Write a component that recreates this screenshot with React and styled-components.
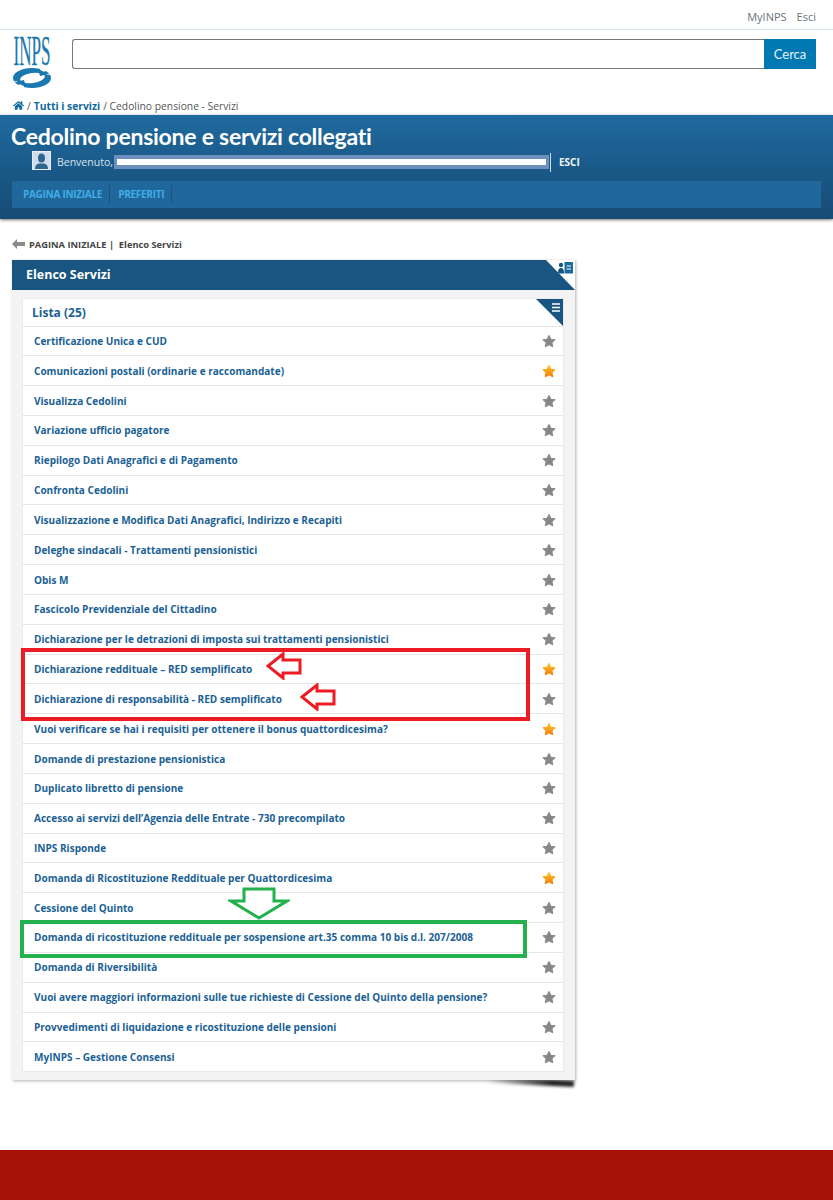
import React from 'react';
import styled, { createGlobalStyle } from 'styled-components';
import { FaHome } from 'react-icons/fa';

const GlobalStyle = createGlobalStyle`
  html, body {
    margin: 0;
    padding: 0;
    background: #fff;
    font-family: "Open Sans", "Liberation Sans", sans-serif;
  }
`;

const Page = styled.div`
  position: relative;
  z-index: 0;
  width: 833px;
  height: 1200px;
  overflow: hidden;
  display: flex;
  flex-direction: column;
`;

const TopBar = styled.div`
  height: 30px;
  border-bottom: 1px solid #d8e7ee;
  display: flex;
  justify-content: flex-end;
  align-items: center;
  gap: 10px;
  padding: 4px 17px 0 0;
  box-sizing: border-box;
  flex: none;
  font-size: 11px;
  color: #6b7378;
`;

const SearchRow = styled.div`
  display: flex;
  padding: 6px 17px 0 13px;
  height: 65px;
  box-sizing: border-box;
  flex: none;
`;

const LogoBox = styled.div`
  width: 59px;
  flex: none;
  svg { overflow: visible; }
`;

const SearchInput = styled.div`
  flex: 1;
  height: 30px;
  margin-top: 3px;
  box-sizing: border-box;
  border: 1px solid #777;
  border-right: none;
  border-radius: 3px 0 0 3px;
  background: #fff;
`;

const SearchButton = styled.div`
  width: 52px;
  height: 30px;
  margin-top: 3px;
  background: #0079b2;
  color: #e6f3f9;
  font-family: Lato, "Open Sans", sans-serif;
  font-size: 13px;
  display: flex;
  align-items: center;
  justify-content: center;
`;

const Crumbs = styled.div`
  height: 20px;
  flex: none;
  display: flex;
  align-items: center;
  gap: 3px;
  padding: 1px 0 0 13px;
  box-sizing: border-box;
  font-size: 10.3px;
  color: #555;
  svg { color: #0f6a9c; }
  b { color: #0f6a9c; font-weight: 700; }
`;

const Banner = styled.div`
  flex: none;
  height: 104px;
  box-sizing: border-box;
  padding: 8px 12px 0 12px;
  background: linear-gradient(#206a9f 0, #1a5a89 50%, #174c75 100%);
  box-shadow: 0 1px 3px rgba(0, 0, 0, 0.55);
  color: #fff;
`;

const Title = styled.div`
  font-family: Lato, "Open Sans", sans-serif;
  font-size: 23px;
  font-weight: 700;
  line-height: 27px;
  letter-spacing: -0.25px;
  margin-left: -1px;
`;

const Welcome = styled.div`
  display: flex;
  align-items: center;
  height: 20px;
  margin: 2px 0 0 20px;
  font-size: 10.5px;
  color: #d5e2ec;
`;

const Avatar = styled.svg`
  width: 19px;
  height: 19px;
  margin: -4px 6px 0 0;
  flex: none;
`;

const MaskedName = styled.div`
  width: 435px;
  height: 14px;
  margin-left: 1px;
  box-sizing: border-box;
  padding: 4px 3px;
  background: #6c90bd;
  &::after {
    content: '';
    display: block;
    height: 6px;
    background: #fff;
  }
`;

const Logout = styled.div`
  margin-left: 1px;
  height: 19px;
  border-left: 1px solid #cfdde8;
  padding-left: 8px;
  line-height: 19px;
  font-size: 10px;
  font-weight: 700;
  color: #f2f6f9;
`;

const NavBar = styled.div`
  display: flex;
  align-items: center;
  height: 27px;
  margin-top: 9px;
  background: #20679c;
  padding-left: 3px;
`;

const NavItem = styled.div`
  height: 19px;
  line-height: 19px;
  padding: 0 7px 0 8px;
  border-right: 1px solid #1a5580;
  font-size: 10px;
  letter-spacing: -0.28px;
  font-weight: 700;
  color: #40aee4;
`;

const BackRow = styled.div`
  flex: none;
  display: flex;
  align-items: center;
  gap: 4px;
  height: 20px;
  margin: 15px 0 0 12px;
  font-size: 9.300px;
  font-weight: 700;
  color: #555;
  span { color: #444; }
`;

const Panel = styled.div`
  flex: none;
  position: relative;
  width: 563px;
  height: 820px;
  margin: 6px 0 0 12px;
  background: #f3f3f3;
  box-shadow: 1px 1px 3px rgba(0, 0, 0, 0.3);
  &::after {
    content: '';
    position: absolute;
    z-index: -1;
    right: 1px;
    bottom: -5px;
    width: 88px;
    height: 6px;
    background: linear-gradient(to right, rgba(40, 40, 40, 0), #222 75%);
    transform: rotate(2.500deg);
    filter: blur(1.500px);
  }
`;

const PanelHeader = styled.div`
  position: relative;
  height: 30px;
  background: #1a5480;
  color: #fff;
  font-size: 12.500px;
  font-weight: 700;
  line-height: 30px;
  padding-left: 14px;
`;

const CornerIcon = styled.svg`
  position: absolute;
  top: 0;
  right: 0;
`;

const ListBox = styled.div`
  width: 540px;
  margin: 9px 0 0 11px;
  background: #fff;
  box-shadow: 0 0 0 1px #e9e9e9;
`;

const ListHeader = styled.div`
  position: relative;
  height: 26.500px;
  line-height: 27px;
  padding-left: 9px;
  font-size: 12px;
  font-weight: 700;
  color: #1a6195;
`;

const Row = styled.div`
  display: flex;
  align-items: center;
  justify-content: space-between;
  height: 29.84px;
  box-sizing: border-box;
  border-top: 1px solid #e6e6e6;
  padding: 0 7px 0 11px;
  font-size: 10.050px;
  font-weight: 700;
  color: #1a6195;
  white-space: nowrap;
`;

const Marker = styled.div`
  position: absolute;
  box-sizing: border-box;
  left: ${p => p.$x}px;
  top: ${p => p.$y}px;
  width: ${p => p.$w}px;
  height: ${p => p.$h}px;
  border: ${p => p.$t}px solid ${p => p.$color};
`;

const Arrow = styled.svg`
  position: absolute;
  left: ${p => p.$x}px;
  top: ${p => p.$y}px;
`;

const Footer = styled.div`
  position: absolute;
  left: 0;
  right: 0;
  bottom: 0;
  height: 50px;
  background: #a81208;
`;

const services = [
  ['Certificazione Unica e CUD'],
  ['Comunicazioni postali (ordinarie e raccomandate)', true],
  ['Visualizza Cedolini'],
  ['Variazione ufficio pagatore'],
  ['Riepilogo Dati Anagrafici e di Pagamento'],
  ['Confronta Cedolini'],
  ['Visualizzazione e Modifica Dati Anagrafici, Indirizzo e Recapiti'],
  ['Deleghe sindacali - Trattamenti pensionistici'],
  ['Obis M'],
  ['Fascicolo Previdenziale del Cittadino'],
  ['Dichiarazione per le detrazioni di imposta sui trattamenti pensionistici'],
  ['Dichiarazione reddituale – RED semplificato', true],
  ['Dichiarazione di responsabilità - RED semplificato'],
  ['Vuoi verificare se hai i requisiti per ottenere il bonus quattordicesima?', true],
  ['Domande di prestazione pensionistica'],
  ['Duplicato libretto di pensione'],
  ['Accesso ai servizi dell’Agenzia delle Entrate - 730 precompilato'],
  ['INPS Risponde'],
  ['Domanda di Ricostituzione Reddituale per Quattordicesima', true],
  ['Cessione del Quinto'],
  ['Domanda di ricostituzione reddituale per sospensione art.35 comma 10 bis d.l. 207/2008'],
  ['Domanda di Riversibilità'],
  ['Vuoi avere maggiori informazioni sulle tue richieste di Cessione del Quinto della pensione?'],
  ['Provvedimenti di liquidazione e ricostituzione delle pensioni'],
  ['MyINPS – Gestione Consensi'],
];

const Star = ({ on }) => (
  <svg width="14" height="14" viewBox="0 0 24 24">
    <path
      d="M12 3l2.900 6.200 6.800.8-5 4.700 1.300 6.700-6-3.300-6 3.300 1.300-6.700-5-4.700 6.800-.8z"
      fill={on ? 'url(#starOn)' : '#858585'}
      stroke={on ? 'url(#starOn)' : '#8c8c8c'}
      strokeWidth="2.500"
      strokeLinejoin="round"
    />
  </svg>
);

const Logo = () => (
  <svg width="39" height="54" viewBox="0 0 39 54">
    <text
      x="0.500"
      y="29"
      fontFamily="Liberation Serif"
      fontSize="43"
      textLength="37"
      lengthAdjust="spacingAndGlyphs"
      fill="#1a78b0"
      stroke="#1a78b0"
      strokeWidth="0.300"
    >
      INPS
    </text>
    <ellipse cx="19" cy="42" rx="19" ry="10" fill="#1a78b0" />
    <ellipse cx="19.500" cy="42" rx="12.500" ry="5" fill="#fff" transform="rotate(-8 19.500 42)" />
    <path d="M28 31l5 1.500-2 4.500 7 1-3 1-9-3zM10 53l-5-1.500 2-4.500-7-1 3-1 9 3z" fill="#fff" />
    <path d="M25 33l11 5-9 2zM13 51L2 46l9-2z" fill="#1a78b0" />
  </svg>
);

const App = () => (
  <Page>
    <GlobalStyle />
    <svg width="0" height="0" style={{ position: 'absolute' }}>
      <defs>
        <linearGradient id="starOn" x1="0" y1="0" x2="0" y2="1">
          <stop offset="0" stopColor="#ffc22e" />
          <stop offset="1" stopColor="#f57f06" />
        </linearGradient>
      </defs>
    </svg>

    <TopBar>
      <span>MyINPS</span>
      <span>Esci</span>
    </TopBar>
    <SearchRow>
      <LogoBox><Logo /></LogoBox>
      <SearchInput />
      <SearchButton>Cerca</SearchButton>
    </SearchRow>
    <Crumbs>
      <FaHome size={11} /> / <b>Tutti i servizi</b> / Cedolino pensione - Servizi
    </Crumbs>

    <Banner>
      <Title>Cedolino pensione e servizi collegati</Title>
      <Welcome>
        <Avatar viewBox="0 0 19 19">
          <rect x="0.500" y="0.500" width="18" height="18" fill="#cfdeea" stroke="#e8eef3" />
          <ellipse cx="9.500" cy="7" rx="3.500" ry="4.500" fill="#2f6690" />
          <path d="M3 18c0-4 2-5 4-5.500h5c2 .5 4 1.500 4 5.500z" fill="#2f6690" />
        </Avatar>
        Benvenuto,
        <MaskedName />
        <Logout>ESCI</Logout>
      </Welcome>
      <NavBar>
        <NavItem>PAGINA INIZIALE</NavItem>
        <NavItem>PREFERITI</NavItem>
      </NavBar>
    </Banner>

    <BackRow>
      <svg width="13" height="10" viewBox="0 0 13 10">
        <path d="M0 5l5-5v3h8v4H5v3z" fill="#8a8a8a" />
      </svg>
      <span>PAGINA INIZIALE |&nbsp; Elenco Servizi</span>
    </BackRow>

    <Panel>
      <PanelHeader>
        Elenco Servizi
        <CornerIcon width="29" height="30" viewBox="0 0 29 30">
          <path d="M0 0h29v30z" fill="#fff" />
          <circle cx="15" cy="5" r="2.200" fill="#1a5480" />
          <path d="M12 13.500c0-4 1-5.500 3-5.500s3 1.500 3 5.500z" fill="#1a5480" />
          <path d="M18.500 2h8.500v11.500h-8.500z" fill="#1a6a9c" />
          <path d="M20.500 6h4.500M20.500 9h4.500" stroke="#fff" strokeWidth="1.200" />
        </CornerIcon>
      </PanelHeader>
      <ListBox>
        <ListHeader>
          Lista (25)
          <CornerIcon width="27" height="27" viewBox="0 0 27 27">
            <path d="M0 0h27v27z" fill="#1a5480" />
            <path d="M16 5h8M16 8.500h8M16 12h8" stroke="#fff" strokeWidth="1.500" />
          </CornerIcon>
        </ListHeader>
        {services.map(([name, on]) => (
          <Row key={name}>
            {name}
            <Star on={on} />
          </Row>
        ))}
      </ListBox>
    </Panel>

    <Marker $x={21} $y={648} $w={509} $h={73} $t={4} $color="#ed1c24" />
    <Arrow $x={266} $y={652} width="36" height="28" viewBox="0 0 36 28">
      <path d="M2 14L17 2v6h17v13H17v5z" fill="#fff" stroke="#ed1c24" strokeWidth="3" />
    </Arrow>
    <Arrow $x={300} $y={683} width="36" height="28" viewBox="0 0 36 28">
      <path d="M2 14L17 2v6h17v13H17v5z" fill="#fff" stroke="#ed1c24" strokeWidth="3" />
    </Arrow>
    <Marker $x={20} $y={920} $w={507} $h={38} $t={4} $color="#22b14c" />
    <Arrow $x={228} $y={887} width="62" height="33" viewBox="0 0 62 33">
      <path d="M16 2h30v12h13L31 31 3 14h13z" fill="#fff" stroke="#22b14c" strokeWidth="3" />
    </Arrow>

    <Footer />
  </Page>
);

export default App;
